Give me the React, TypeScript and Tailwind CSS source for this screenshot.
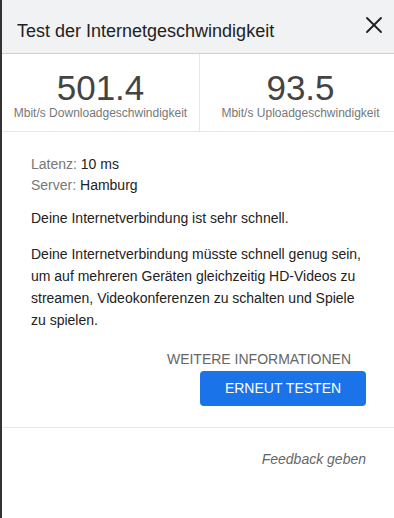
import { X } from 'lucide-react';

export default function App() {
  return (
    <div className="w-[394px] h-[518px] bg-white border-l-2 border-[#333] font-['Liberation_Sans',Arial,sans-serif] flex flex-col overflow-hidden">
      {/* Header */}
      <div className="h-[54px] shrink-0 bg-[#f1f2f4] border-b border-[#cfcfcf] flex items-center justify-between pl-[15px] pr-[6px]">
        <h1 className="text-[18px] text-[#222] pt-[9px]">Test der Internetgeschwindigkeit</h1>
        <X className="w-[28px] h-[28px] text-[#222] -mt-[4px]" strokeWidth={1.6} />
      </div>

      {/* Stats */}
      <div className="h-[78px] shrink-0 grid grid-cols-[198px_1fr] border-b border-[#e6e6e6]">
        <div className="flex flex-col items-center pt-[16px] border-r border-[#e6e6e6]">
          <span className="text-[35px] leading-none text-[#444]">501.4</span>
          <span className="mt-[1px] text-[12px] leading-[14px] text-[#777]">Mbit/s Downloadgeschwindigkeit</span>
        </div>
        <div className="flex flex-col items-center pt-[16px] pl-[7px]">
          <span className="text-[35px] leading-none text-[#444]">93.5</span>
          <span className="mt-[1px] text-[12px] leading-[14px] text-[#777]">Mbit/s Uploadgeschwindigkeit</span>
        </div>
      </div>

      {/* Body */}
      <div className="pl-[29px] pr-[28px] pt-[22px] text-[14px] text-[#222]">
        <div className="leading-[21px]">
          <div><span className="text-[#777]">Latenz:</span> 10 ms</div>
          <div><span className="text-[#777]">Server:</span> Hamburg</div>
        </div>
        <p className="mt-[11px] leading-[22px]">Deine Internetverbindung ist sehr schnell.</p>
        <p className="mt-[14px] leading-[22px]">
          Deine Internetverbindung müsste schnell genug sein, um auf mehreren Geräten gleichzeitig HD-Videos zu streamen, Videokonferenzen zu schalten und Spiele zu spielen.
        </p>
        <div className="flex flex-col items-end mt-[18px]">
          <span className="text-[14px] leading-[20px] text-[#666] mr-[15px]">WEITERE INFORMATIONEN</span>
          <button className="mt-[2px] w-[166px] h-[35px] rounded-[4px] bg-[#1a73e8] text-white text-[14px]">ERNEUT TESTEN</button>
        </div>
      </div>

      <div className="mt-[21px] border-t border-[#e6e6e6] flex justify-end pr-[28px] pt-[21px]">
        <span className="italic text-[14px] text-[#666]">Feedback geben</span>
      </div>
    </div>
  );
}
